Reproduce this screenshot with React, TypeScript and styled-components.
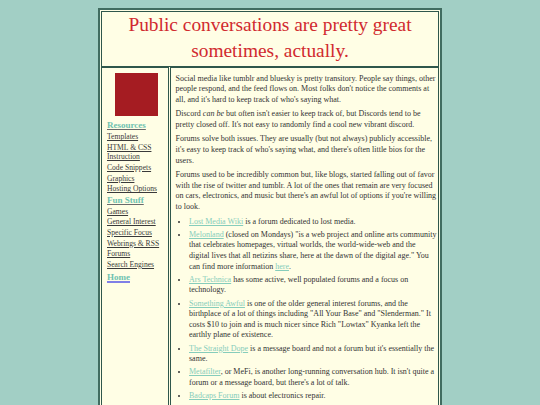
import React from 'react'
import styled, { createGlobalStyle } from 'styled-components'

const GlobalStyle = createGlobalStyle`
  html, body {
    margin: 0;
    padding: 0;
    background: #a2cfc5;
  }
  body {
    font-family: "Liberation Serif", "Times New Roman", serif;
    color: #333333;
  }
`

const Frame = styled.div`
  width: 344px;
  box-sizing: border-box;
  margin: 8px auto 0;
  border: 2px solid #416c60;
  padding: 1px;
  background: #fffee5;
  display: grid;
  grid-template-columns: 68px 1fr;
  column-gap: 1px;
`

const Header = styled.header`
  grid-column: 1 / span 2;
  border: 1px solid #2f574c;
  padding: 0 8px 2px;
  text-align: center;
`

const Title = styled.h1`
  margin: 0;
  font-size: 19.4px;
  line-height: 26px;
  font-weight: normal;
  color: #d12a2f;
`

const Sidebar = styled.nav`
  border: 1px solid #2f574c;
  padding: 4.7px 3px 0 5px;
  min-height: 340px;
`

const Avatar = styled.div`
  width: 43px;
  height: 43px;
  margin: 0 auto 4.5px;
  background: #a51c22;
`

const NavHeading = styled.a<{ $home?: boolean }>`
  display: block;
  margin: ${(p) => (p.$home ? '2.7px' : '0')} 0 1px;
  font-size: 9px;
  line-height: 11px;
  font-weight: bold;
  color: #6fc3b0;
  text-decoration: underline;
  text-decoration-color: ${(p) => (p.$home ? '#7f7fe6' : '#6a6a6a')};
  text-decoration-thickness: ${(p) => (p.$home ? '2px' : '1px')};
  cursor: pointer;
`

const NavLink = styled.a`
  display: block;
  margin-bottom: 1px;
  font-size: 7.6px;
  line-height: 9.6px;
  color: #3a3a3a;
  text-decoration: underline;
  cursor: pointer;
`

const Content = styled.main`
  border: 1px solid #2f574c;
  padding: 5.5px 0 8px 4.5px;
  font-size: 8px;
  line-height: 10.6px;
`

const Para = styled.p`
  margin: 0 0 4px;
`

const List = styled.ul`
  margin: 4px 0 0;
  padding-left: 13.5px;
`

const Item = styled.li`
  margin-top: 2.6px;
  &:first-child {
    margin-top: 0;
  }
`

const Ext = styled.a`
  color: #86cdbb;
  text-decoration: underline;
`

const resources = ['Templates', 'HTML & CSS Instruction', 'Code Snippets', 'Graphics', 'Hosting Options']
const funStuff = ['Games', 'General Interest', 'Specific Focus', 'Webrings & RSS', 'Forums', 'Search Engines']

const App: React.FC = () => {
  return (
    <>
      <GlobalStyle />
      <Frame>
        <Header>
          <Title>Public conversations are pretty great sometimes, actually.</Title>
        </Header>
        <Sidebar>
          <Avatar />
          <NavHeading>Resources</NavHeading>
          {resources.map((r) => (
            <NavLink key={r}>{r}</NavLink>
          ))}
          <NavHeading>Fun Stuff</NavHeading>
          {funStuff.map((f) => (
            <NavLink key={f}>{f}</NavLink>
          ))}
          <NavHeading $home>Home</NavHeading>
        </Sidebar>
        <Content>
          <Para>
            Social media like tumblr and bluesky is pretty transitory. People say things, other people respond, and the
            feed flows on. Most folks don't notice the comments at all, and it's hard to keep track of who's saying what.
          </Para>
          <Para>
            Discord <em>can be</em> but often isn't easier to keep track of, but Discords tend to be pretty closed off.
            It's not easy to randomly find a cool new vibrant discord.
          </Para>
          <Para>
            Forums solve both issues. They are usually (but not always) publicly accessible, it's easy to keep track of
            who's saying what, and there's often little bios for the users.
          </Para>
          <Para>
            Forums used to be incredibly common but, like blogs, started falling out of favor with the rise of twitter
            and tumblr. A lot of the ones that remain are very focused on cars, electronics, and music but there's an
            awful lot of options if you're willing to look.
          </Para>
          <List>
            <Item>
              <Ext>Lost Media Wiki</Ext> is a forum dedicated to lost media.
            </Item>
            <Item>
              <Ext>Melonland</Ext> (closed on Mondays) "is a web project and online arts community that celebrates
              homepages, virtual worlds, the world-wide-web and the digital lives that all netizins share, here at the
              dawn of the digital age." You can find more information <Ext>here</Ext>.
            </Item>
            <Item>
              <Ext>Ars Technica</Ext> has some active, well populated forums and a focus on technology.
            </Item>
            <Item>
              <Ext>Something Awful</Ext> is one of the older general interest forums, and the birthplace of a lot of
              things including "All Your Base" and "Slenderman." It costs $10 to join and is much nicer since Rich
              "Lowtax" Kyanka left the earthly plane of existence.
            </Item>
            <Item>
              <Ext>The Straight Dope</Ext> is a message board and not a forum but it's essentially the same.
            </Item>
            <Item>
              <Ext>Metafilter</Ext>, or MeFi, is another long-running conversation hub. It isn't quite a forum or a
              message board, but there's a lot of talk.
            </Item>
            <Item>
              <Ext>Badcaps Forum</Ext> is about electronics repair.
            </Item>
          </List>
        </Content>
      </Frame>
    </>
  )
}

export default App
